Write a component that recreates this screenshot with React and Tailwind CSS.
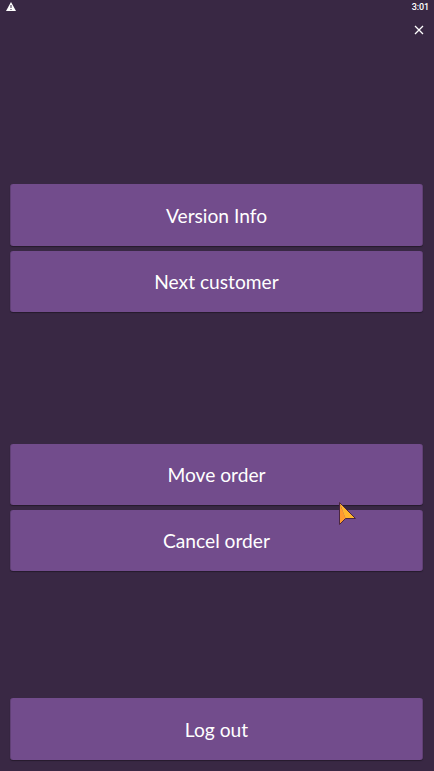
function MenuButton({ children, className = "" }) {
  return (
    <button className={`block w-full rounded-[3px] border-x border-[#604075] bg-[#724c8c] pt-0.5 text-center text-[19.2px] text-white shadow-[0_1px_1px_rgba(0,0,0,0.35)] ${className}`}>
      {children}
    </button>
  );
}

export default function App() {
  return (
    <main className="relative flex h-[771px] w-[434px] flex-col overflow-hidden bg-[#392844] font-['Lato',sans-serif]">
      <header className="flex h-3 items-center justify-between pr-[5px] pl-[6px]">
        <svg className="h-[9px] w-[10px]" viewBox="0 0 10 9">
          <path d="M5 0 10 9H0Z" fill="#fff" />
          <path d="M4.5 3h1v3h-1zM4.5 7h1v1h-1z" fill="#392844" />
        </svg>
        <time className="pt-px font-['Roboto',sans-serif] text-[9px] leading-3 font-medium tracking-[-0.1px] text-white">3:01</time>
      </header>
      <div className="flex h-[172px] items-start justify-end pt-[13px] pr-[10px]">
        <button aria-label="Close">
          <svg className="size-[10px]" viewBox="0 0 10 10" fill="none" stroke="#fff" strokeWidth="1.3">
            <path d="m1 1 8 8M9 1 1 9" />
          </svg>
        </button>
      </div>
      <nav className="flex flex-col pr-[11px] pl-[10px]">
        <MenuButton className="h-[62px]">Version Info</MenuButton>
        <MenuButton className="mt-[5px] h-[61px]">Next customer</MenuButton>
        <MenuButton className="mt-[132px] h-[61px]">Move order</MenuButton>
        <MenuButton className="mt-[5px] h-[61px]">Cancel order</MenuButton>
        <MenuButton className="mt-[127px] h-[62px]">Log out</MenuButton>
      </nav>
      <svg className="absolute top-[501px] left-[338px] h-[26px] w-[19px]" viewBox="0 0 19 26">
        <path d="M1.5 1.5v22l6-6Z" fill="#ff9a2e" />
        <path d="M1.5 1.5 17.5 17.5h-10Z" fill="#ffb52e" />
        <path d="M1.5 1.5v22l6-6h10Z" fill="none" stroke="#4a2640" />
      </svg>
    </main>
  );
}
